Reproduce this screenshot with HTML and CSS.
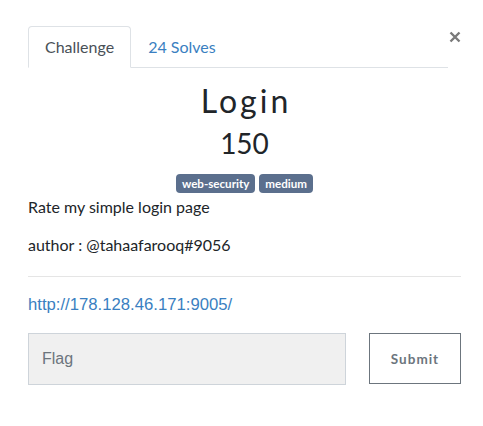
FILE: index.html
```html
<!DOCTYPE html>
<html>
<head>
<meta charset="utf-8">
<link rel="stylesheet" href="styles.css">
</head>
<body>
<div class="modal">
  <div class="header">
    <ul class="tabs">
      <li class="tab active">Challenge</li>
      <li class="tab">24 Solves</li>
    </ul>
    <button class="close" aria-label="Close">
      <svg width="12" height="12" viewBox="0 0 12 12"><path d="M1.5 1.5 L10.5 10.5 M10.5 1.5 L1.5 10.5" stroke="#7a7a7a" stroke-width="2.4" fill="none"/></svg>
    </button>
  </div>
  <h2 class="name">Login</h2>
  <h3 class="value">150</h3>
  <div class="tags">
    <span class="badge">web-security</span>
    <span class="badge">medium</span>
  </div>
  <div class="desc">
    <p>Rate my simple login page</p>
    <p>author : @tahaafarooq#9056</p>
  </div>
  <hr class="rule">
  <a class="link" href="#">http://178.128.46.171:9005/</a>
  <form class="submit-row">
    <input class="flag" type="text" placeholder="Flag">
    <button class="submit" type="button">Submit</button>
  </form>
</div>
</body>
</html>
```
FILE: styles.css
```css
html, body {
  margin: 0;
  padding: 0;
  background: #fff;
}
body {
  font-family: Lato, "Noto Sans", sans-serif;
  font-size: 16px;
  line-height: 1.5;
  color: #212529;
}
.modal {
  width: 433px;
  padding: 26px 22px 0 28px;
}
.header {
  display: flex;
  align-items: flex-start;
}
.tabs {
  flex: 1;
  display: flex;
  margin: 0;
  padding: 0;
  list-style: none;
  border-bottom: 1px solid #dee2e6;
}
.tab {
  padding: 8px 16px;
  margin-bottom: -1px;
  border: 1px solid transparent;
  border-top-left-radius: 4px;
  border-top-right-radius: 4px;
  color: #3a7fc1;
}
.tab.active {
  color: #495057;
  border-color: #dee2e6 #dee2e6 #fff;
  background: #fff;
}
.close {
  width: 13px;
  padding: 0;
  margin-top: 5px;
  border: 0;
  background: none;
  display: flex;
  justify-content: flex-end;
}
.name {
  margin: 14px 0 0;
  text-align: center;
  font-weight: 400;
  font-size: 32px;
  line-height: 1.2;
  letter-spacing: 3px;
  padding-left: 3px;
}
.value {
  margin: 7px 0 0;
  text-align: center;
  font-weight: 400;
  font-size: 28px;
  line-height: 1.2;
}
.tags {
  display: flex;
  justify-content: center;
  gap: 4px;
  margin-top: 13px;
}
.badge {
  background: #5b6f8d;
  color: #fff;
  font-size: 11.6px;
  font-weight: 700;
  line-height: 13px;
  padding: 3px 6px;
  border-radius: 4px;
}
.desc p {
  margin: 0 0 14px;
}
.desc {
  margin-top: 2px;
}
.rule {
  margin: 19px 0 0;
  border: 0;
  border-top: 1px solid #e5e5e5;
}
.link {
  display: block;
  margin-top: 15px;
  font-family: "Liberation Sans", Arial, sans-serif;
  font-size: 16.7px;
  color: #3a7fc1;
  text-decoration: none;
}
.submit-row {
  display: flex;
  justify-content: space-between;
  margin-top: 16px;
}
.flag {
  width: 318px;
  height: 52px;
  box-sizing: border-box;
  border: 1px solid #ced4da;
  background: #f0f0f0;
  padding: 0 13px;
  font-family: "Liberation Sans", Arial, sans-serif;
  font-size: 16px;
  color: #495057;
}
.flag::placeholder {
  color: #6c757d;
}
.submit {
  width: 92px;
  height: 51px;
  box-sizing: border-box;
  border: 1px solid #6c757d;
  background: #fff;
  font-family: Lato, sans-serif;
  font-weight: 700;
  font-size: 13.5px;
  letter-spacing: 1px;
  color: #6c757d;
}
```
